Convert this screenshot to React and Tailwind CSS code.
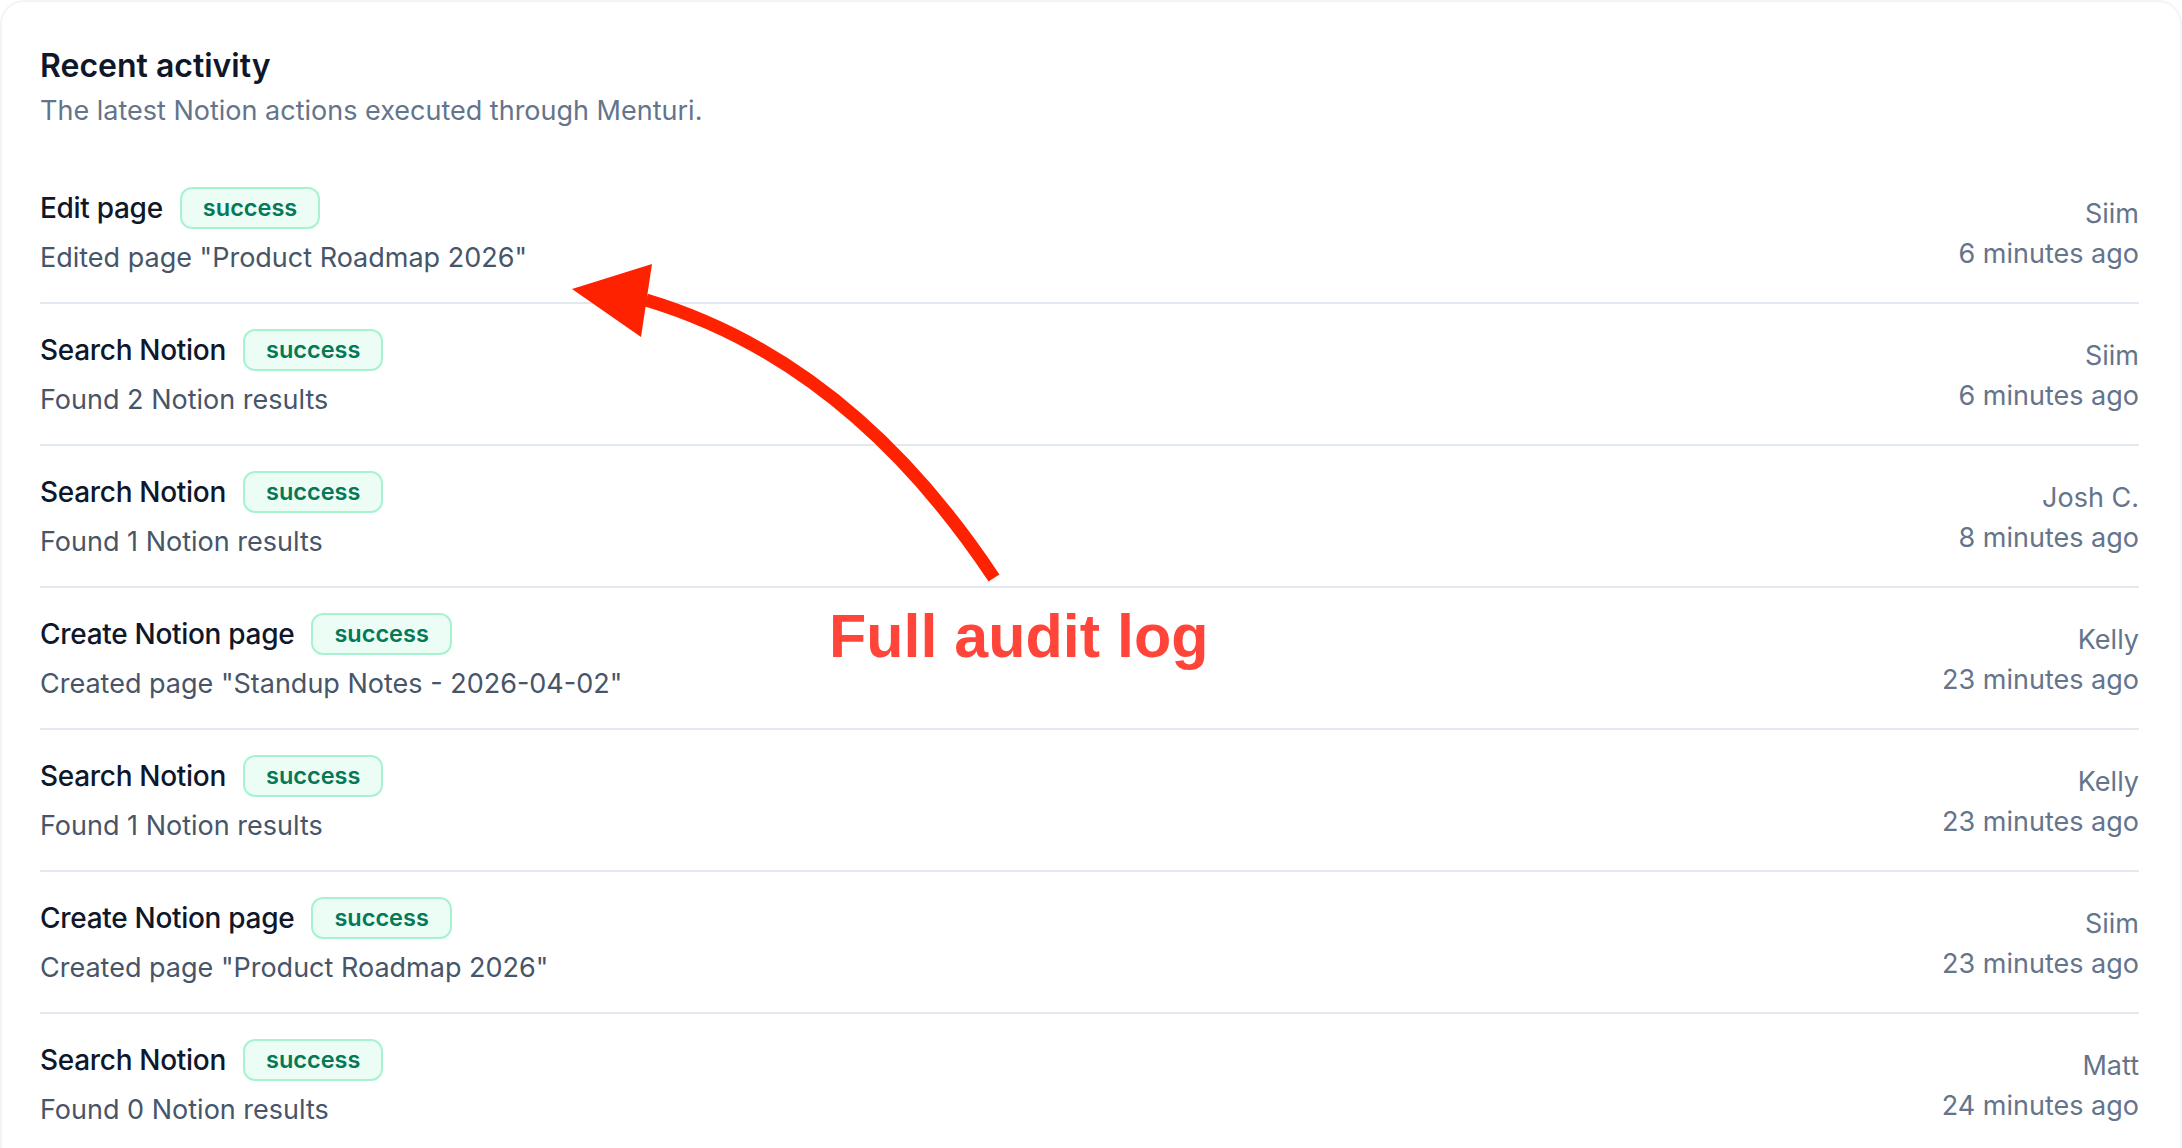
const activity = [
  { action: "Edit page", detail: 'Edited page "Product Roadmap 2026"', user: "Siim", time: "6 minutes ago" },
  { action: "Search Notion", detail: "Found 2 Notion results", user: "Siim", time: "6 minutes ago" },
  { action: "Search Notion", detail: "Found 1 Notion results", user: "Josh C.", time: "8 minutes ago" },
  { action: "Create Notion page", detail: 'Created page "Standup Notes - 2026-04-02"', user: "Kelly", time: "23 minutes ago" },
  { action: "Search Notion", detail: "Found 1 Notion results", user: "Kelly", time: "23 minutes ago" },
  { action: "Create Notion page", detail: 'Created page "Product Roadmap 2026"', user: "Siim", time: "23 minutes ago" },
  { action: "Search Notion", detail: "Found 0 Notion results", user: "Matt", time: "24 minutes ago" },
];

function StatusBadge({ status }) {
  return (
    <span className="inline-flex h-[42px] items-center rounded-[12px] border-2 border-[#a7f3d0] bg-[#ecfdf5] px-[21px] text-[23.5px] font-semibold text-[#047857]">
      {status}
    </span>
  );
}

function ActivityRow({ item }) {
  return (
    <li className="flex items-center justify-between border-b-2 border-[#e2e8f0] pt-[25px] pb-[24px]">
      <div>
        <div className="flex items-center gap-[17px]">
          <span className="text-[28px] leading-[40px] font-medium tracking-[-0.3px] text-[#0f172a]">{item.action}</span>
          <StatusBadge status="success" />
        </div>
        <p className="mt-[9px] text-[27px] leading-[40px] text-[#475569]">{item.detail}</p>
      </div>
      <div className="pt-[2px] text-right text-[27px] leading-[40px] text-[#64748b]">
        <p>{item.user}</p>
        <p>{item.time}</p>
      </div>
    </li>
  );
}

export default function App() {
  return (
    <div className="relative h-[1148px] overflow-hidden bg-white font-['Inter',sans-serif]">
      <div className="h-[1240px] rounded-[24px] border-2 border-[#f1f5f9] px-[38px] pt-[46px]">
        {/* Header */}
        <h2 className="text-[32px] leading-[36px] font-semibold text-[#0f172a]">Recent activity</h2>
        <p className="mt-[7px] text-[27px] leading-[40px] text-[#64748b]">
          The latest Notion actions executed through Menturi.
        </p>

        {/* Activity list */}
        <ul className="mt-[31px] pr-[3px]">
          {activity.map((item, i) => (
            <ActivityRow key={i} item={item} />
          ))}
        </ul>
      </div>

      {/* Annotation overlay */}
      <svg className="pointer-events-none absolute inset-0" width="2182" height="1148" viewBox="0 0 2182 1148">
        <path d="M994 578 Q850 361 646 300" fill="none" stroke="#ff2200" strokeWidth="13" />
        <polygon points="572,289 652,264 641,337" fill="#ff2200" />
      </svg>
      <span className="absolute left-[829px] top-[606px] font-['Liberation_Sans',Arial,sans-serif] text-[61px] leading-none font-bold text-[#ff4539]">
        Full audit log
      </span>
    </div>
  );
}
